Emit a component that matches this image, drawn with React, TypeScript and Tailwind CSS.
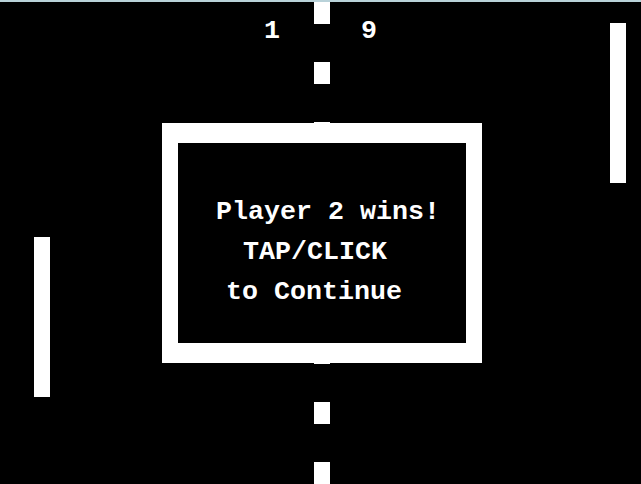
import React from "react";

const dashes = [2, 62, 122, 342, 402, 462];

export default function App() {
  return (
    <div className="w-[641px] h-[484px] bg-black flex flex-col overflow-hidden">
      <div className="h-[2px] bg-[#b9d2d9]" />
      <div
        className="relative flex-1 bg-black text-white"
        style={{ fontFamily: '"Liberation Mono", "DejaVu Sans Mono", monospace' }}
      >
        {dashes.map((y) => (
          <div
            key={y}
            className="absolute left-[314px] w-[16px] h-[22px] bg-white"
            style={{ top: y - 2 }}
          />
        ))}
        <div className="absolute left-[264px] top-[16px] text-[26.67px] leading-none font-bold">1</div>
        <div className="absolute left-[361px] top-[16px] text-[26.67px] leading-none font-bold">9</div>
        <div className="absolute left-[34px] top-[235px] w-[16px] h-[160px] bg-white" />
        <div className="absolute left-[610px] top-[21px] w-[16px] h-[160px] bg-white" />
        <div className="absolute left-[162px] top-[121px] w-[320px] h-[240px] bg-white px-[16px] py-[20px]">
          <div className="w-full h-full bg-black flex flex-col items-start pt-[49px] text-[26.67px] leading-[40px] font-bold whitespace-pre">
            <div className="ml-[38px]">Player 2 wins!</div>
            <div className="ml-[65px]">TAP/CLICK</div>
            <div className="ml-[48px]">to Continue</div>
          </div>
        </div>
      </div>
    </div>
  );
}
